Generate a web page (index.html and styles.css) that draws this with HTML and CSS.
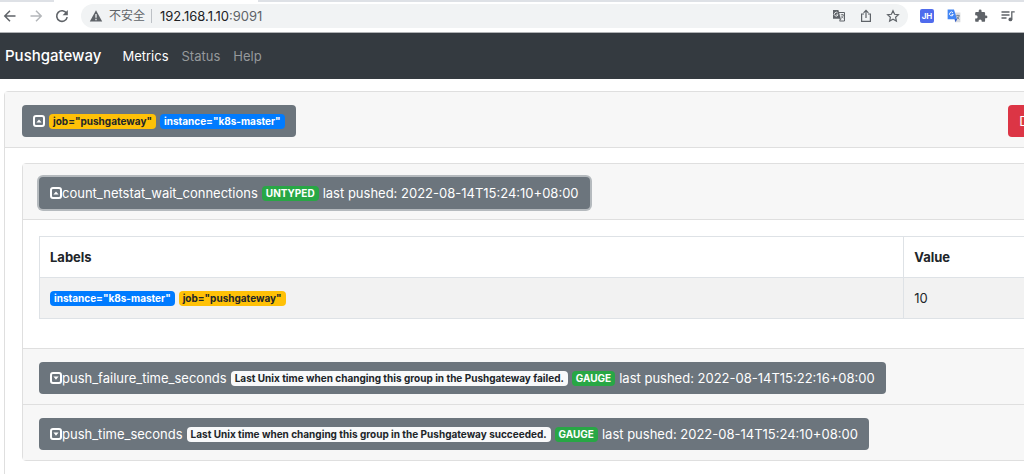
FILE: index.html
```html
<!DOCTYPE html>
<html lang="en">
<head>
    <meta charset="UTF-8">
    <meta name="viewport" content="width=device-width, initial-scale=1.0">
    <title>Prometheus Pushgateway</title>
    <link rel="stylesheet" href="styles.css">
</head>
<body>
    <div class="tabstrip"><div class="tab"></div></div>
    <div class="toolbar">
        <button class="tool" aria-label="Back">
            <svg width="14" height="14" viewBox="0 0 14 14" fill="none" stroke="#5f6368" stroke-width="1.5"><path d="M12.5 7H2M7 1.8L1.8 7L7 12.2"/></svg>
        </button>
        <button class="tool" aria-label="Forward">
            <svg width="14" height="14" viewBox="0 0 14 14" fill="none" stroke="#b4b7ba" stroke-width="1.5"><path d="M1.5 7H12M7 1.8L12.2 7L7 12.2"/></svg>
        </button>
        <button class="tool" aria-label="Reload">
            <svg width="14" height="14" viewBox="0 0 14 14"><path d="M11.6 4.4A5.3 5.3 0 1 0 12.2 8.2" fill="none" stroke="#5f6368" stroke-width="1.6"/><path d="M12.8 1v5.2H7.6z" fill="#5f6368"/></svg>
        </button>
        <div class="address">
            <svg width="14" height="14" viewBox="0 0 14 14"><path d="M7 1.2L13.2 12.4H.8z" fill="#5f6368"/><path d="M7 5v3.8M7 9.8v1.4" stroke="#f1f3f4" stroke-width="1.3"/></svg>
            <span class="insecure">不安全</span>
            <span class="url">192.168.1.10<span class="port">:9091</span></span>
            <div class="address-actions">
                <button class="tool" aria-label="Translate">
                    <svg width="14" height="14" viewBox="0 0 14 14"><path d="M6.5 3.5h6v8.5h-5" fill="#f1f3f4" stroke="#5f6368"/><path d="M1 1h5.4l2.4 8.8H1z" fill="#5f6368"/><path d="M5.8 4.2A1.9 1.9 0 1 0 6 5.8H4.3" fill="none" stroke="#f1f3f4" stroke-width=".9"/><path d="M8.8 5.8h3M10.3 5v1M11.5 6c-.4 1.6-1.2 2.6-2.3 3.3M9.5 7.2l2.1 2.2M7 10h2l-1.5 2" fill="none" stroke="#5f6368" stroke-width=".8"/></svg>
                </button>
                <button class="tool" aria-label="Share">
                    <svg width="14" height="14" viewBox="0 0 14 14" fill="none" stroke="#5f6368" stroke-width="1.2"><path d="M5 5H2.6v7.4h8.8V5H9M7 9V1.8M4.6 3.8L7 1.4l2.4 2.4"/></svg>
                </button>
                <button class="tool" aria-label="Bookmark">
                    <svg width="14" height="14" viewBox="0 0 14 14" fill="none" stroke="#5f6368" stroke-width="1.2"><path d="M7 1.8l1.6 3.5 3.8.4-2.8 2.6.8 3.8L7 10.2l-3.4 1.9.8-3.8-2.8-2.6 3.8-.4z"/></svg>
                </button>
            </div>
        </div>
        <div class="extensions">
            <button class="tool ext-jh">JH</button>
            <button class="tool" aria-label="Google Translate">
                <svg width="14" height="14" viewBox="0 0 14 14"><path d="M6 3.4h7.4v9.8H8z" fill="#dadce0"/><path d="M7.6 10h2.6L8.6 13.2z" fill="#2a56c6"/><path d="M.6.6H7l3 9.6H.6z" fill="#4285f4"/><path d="M6 3.8A1.9 1.9 0 1 0 6.3 5.4H4.6" fill="none" stroke="#fff" stroke-width=".9"/><path d="M9.2 6.6h3.4M10.9 5.8v.8M12.2 6.8c-.3 1.4-1 2.3-2 3M9.8 7.6l2.4 2.8" fill="none" stroke="#6c7a89" stroke-width=".8"/></svg>
            </button>
            <button class="tool" aria-label="Extensions">
                <svg width="14" height="14" viewBox="0 0 24 24"><path d="M20.5 11H19V7a2 2 0 0 0-2-2h-4V3.5a2.5 2.5 0 0 0-5 0V5H4a2 2 0 0 0-2 2v3.8h1.5a2.7 2.7 0 0 1 0 5.4H2V20a2 2 0 0 0 2 2h3.8v-1.5a2.7 2.7 0 0 1 5.4 0V22H17a2 2 0 0 0 2-2v-4h1.5a2.5 2.5 0 0 0 0-5z" fill="#5f6368"/></svg>
            </button>
            <button class="tool" aria-label="Media">
                <svg width="14" height="14" viewBox="0 0 14 14"><path d="M.5 3h8M.5 6h8M.5 9h5M10.8 10.5V2.8h2.9" fill="none" stroke="#5f6368" stroke-width="1.3"/><circle cx="9.4" cy="10.4" r="1.9" fill="#5f6368"/></svg>
            </button>
        </div>
    </div>

    <nav class="navbar">
        <a class="brand" href="#">Pushgateway</a>
        <a class="nav-link active" href="#">Metrics</a>
        <a class="nav-link" href="#">Status</a>
        <a class="nav-link" href="#">Help</a>
    </nav>

    <main class="groups">
        <section class="group">
            <div class="card-header">
                <button class="btn">
                    <svg class="caret" viewBox="0 0 12 12"><rect x="1" y="1" width="10" height="10" rx="2" fill="none" stroke="#fff" stroke-width="2"/><path d="M3.4 7.6L6 4.4l2.6 3.2z" fill="#fff"/></svg>
                    <span class="badge warning">job="pushgateway"</span>
                    <span class="badge primary">instance="k8s-master"</span>
                </button>
                <button class="btn danger">Delete Group</button>
            </div>
            <div class="group-body">
                <div class="accordion">
                    <div class="card-header">
                        <button class="btn focused">
                            <span class="metric"><svg class="caret" viewBox="0 0 12 12"><rect x="1" y="1" width="10" height="10" rx="2" fill="none" stroke="#fff" stroke-width="2"/><path d="M3.4 7.6L6 4.4l2.6 3.2z" fill="#fff"/></svg>count_netstat_wait_connections</span>
                            <span class="badge success">UNTYPED</span>
                            <span>last pushed: 2022-08-14T15:24:10+08:00</span>
                        </button>
                    </div>
                    <div class="metric-body">
                        <table>
                            <thead>
                                <tr>
                                    <th class="labels">Labels</th>
                                    <th>Value</th>
                                </tr>
                            </thead>
                            <tbody>
                                <tr>
                                    <td>
                                        <div class="badges">
                                            <span class="badge primary">instance="k8s-master"</span>
                                            <span class="badge warning">job="pushgateway"</span>
                                        </div>
                                    </td>
                                    <td>10</td>
                                </tr>
                            </tbody>
                        </table>
                    </div>
                    <div class="card-header">
                        <button class="btn">
                            <span class="metric"><svg class="caret" viewBox="0 0 12 12"><rect x="1" y="1" width="10" height="10" rx="2" fill="none" stroke="#fff" stroke-width="2"/><path d="M3.4 4.6L6 7.8l2.6-3.2z" fill="#fff"/></svg>push_failure_time_seconds</span>
                            <span class="badge light">Last Unix time when changing this group in the Pushgateway failed.</span>
                            <span class="badge success">GAUGE</span>
                            <span>last pushed: 2022-08-14T15:22:16+08:00</span>
                        </button>
                    </div>
                    <div class="card-header">
                        <button class="btn">
                            <span class="metric"><svg class="caret" viewBox="0 0 12 12"><rect x="1" y="1" width="10" height="10" rx="2" fill="none" stroke="#fff" stroke-width="2"/><path d="M3.4 4.6L6 7.8l2.6-3.2z" fill="#fff"/></svg>push_time_seconds</span>
                            <span class="badge light">Last Unix time when changing this group in the Pushgateway succeeded.</span>
                            <span class="badge success">GAUGE</span>
                            <span>last pushed: 2022-08-14T15:24:10+08:00</span>
                        </button>
                    </div>
                </div>
            </div>
        </section>
    </main>
</body>
</html>
```
FILE: styles.css
```css
* {
    box-sizing: border-box;
}

body {
    margin: 0;
    font-family: Inter, "Noto Sans CJK SC", sans-serif;
    font-size: 13px;
    line-height: 20px;
    color: #212529;
    background-color: #fff;
    overflow: hidden;
}

button {
    font-family: inherit;
    cursor: pointer;
}

/* browser bar */
.tabstrip {
    height: 2px;
    padding-left: 54px;
    background-color: #dee1e6;
}

.tab {
    width: 204px;
    height: 2px;
    background-color: #fff;
}

.toolbar {
    display: flex;
    align-items: center;
    height: 31px;
    padding: 0 9px 2px 3px;
    gap: 12px;
    border-bottom: 1px solid #b0b2b5;
}

.tool {
    display: flex;
    justify-content: center;
    width: 14px;
    padding: 0;
    border: none;
    background: none;
}

.address {
    flex: 1;
    display: flex;
    align-items: center;
    height: 24px;
    padding: 0 8px;
    border-radius: 12px;
    background-color: #f1f3f4;
}

.insecure {
    margin-left: 6px;
    padding-right: 6px;
    border-right: 1px solid #bdc1c6;
    font-size: 12px;
    line-height: 14px;
    color: #5f6368;
}

.url {
    margin-left: 8px;
    color: #202124;
}

.port {
    color: #5f6368;
}

.address-actions {
    display: flex;
    gap: 13px;
    margin-left: auto;
}

.extensions {
    display: flex;
    align-items: center;
    gap: 13px;
}

.ext-jh {
    border-radius: 2px;
    background-color: #4f6bed;
    color: #fff;
    font-size: 8px;
    font-weight: 700;
    line-height: 14px;
}

/* navbar */
.navbar {
    display: flex;
    align-items: center;
    gap: 13px;
    height: 46px;
    padding: 0 5px;
    background-color: #343a40;
}

.navbar a {
    text-decoration: none;
}

.brand {
    margin-right: 8px;
    font-size: 15px;
    font-weight: 500;
    color: #fff;
}

.nav-link {
    color: #96999c;
}

.nav-link.active {
    color: #fff;
}

/* groups, wider than the window */
.groups {
    margin: 12px -104px 0 4px;
}

.group {
    border: 1px solid #dfdfdf;
    border-radius: 4px 4px 0 0;
}

.card-header {
    display: flex;
    justify-content: space-between;
    padding: 13px 16px 10px;
    background-color: #f7f7f7;
    border-bottom: 1px solid #dfdfdf;
}

.group > .card-header {
    padding-left: 17px;
}

.group-body {
    padding: 15px 16px 80px 17px;
}

.accordion {
    border: 1px solid #dfdfdf;
    border-radius: 4px;
}

.accordion .card-header:last-child {
    border-bottom: none;
}

.btn {
    display: flex;
    align-items: center;
    gap: 4px;
    height: 32px;
    padding: 0 11px;
    border: none;
    border-radius: 4px;
    background-color: #6c757d;
    color: #fff;
    font-size: 13px;
    white-space: nowrap;
}

.btn.focused {
    box-shadow: 0 0 0 2px #b5babe;
}

.btn.danger {
    background-color: #dc3545;
}

.metric {
    display: flex;
    align-items: center;
}

.caret {
    width: 12px;
    height: 12px;
}

.badge {
    padding: 0 4px;
    border-radius: 4px;
    font-size: 10px;
    font-weight: 700;
    line-height: 15px;
}

.badge.warning {
    background-color: #ffc107;
    color: #212529;
}

.badge.primary {
    background-color: #007bff;
    color: #fff;
}

.badge.success {
    background-color: #28a745;
    color: #fff;
}

.badge.light {
    background-color: #f8f9fa;
    color: #212529;
}

.badges {
    display: flex;
    gap: 4px;
}

/* metric table */
.metric-body {
    padding: 16px 16px 29px;
    border-bottom: 1px solid #dfdfdf;
}

table {
    width: 100%;
    border-collapse: collapse;
}

th, td {
    height: 41px;
    padding: 0 10px;
    border: 1px solid #dee2e6;
    text-align: left;
}

th {
    font-weight: 700;
}

.labels {
    width: 82%;
}

tbody tr {
    background-color: #f2f2f2;
}
```
